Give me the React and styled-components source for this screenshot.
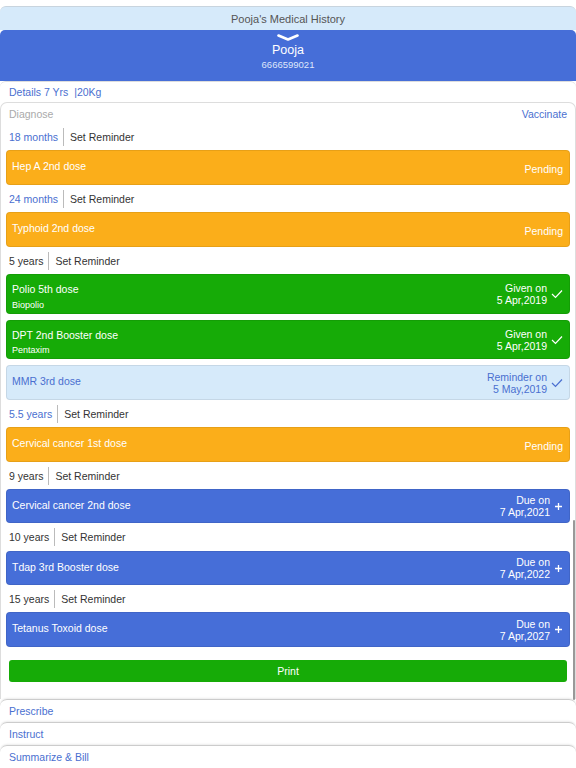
import React from "react";
import styled, { createGlobalStyle } from "styled-components";

const G = createGlobalStyle`
  body{margin:0;background:#fff;font-family:"Liberation Sans",Arial,sans-serif;}
`;
const Page = styled.div`width:576px;height:768px;overflow:hidden;display:flex;flex-direction:column;position:relative;`;
const Title = styled.div`margin-top:6px;height:23px;background:#d6eafa;border-top:1px solid #c8d4de;border-radius:6px 6px 0 0;
  display:flex;align-items:center;justify-content:center;font-size:11px;color:#555;`;
const Header = styled.div`height:51px;background:#466ed8;border-radius:5px 5px 0 0;color:#fff;display:flex;flex-direction:column;align-items:center;`;
const Name = styled.div`font-size:12.5px;margin-top:1px;`;
const Phone = styled.div`font-size:9.5px;color:#dfe6fb;margin-top:2px;`;
const Details = styled.div`height:20px;border-top:1px solid #ddd;border-radius:6px 6px 0 0;padding:0 9px;display:flex;align-items:center;font-size:10.5px;color:#4a6fd0;`;
const Panel = styled.div`border:1px solid #ddd;border-bottom:none;border-radius:7px 7px 0 0;padding:0 5px;display:flex;flex-direction:column;flex:1;`;
const Tabs = styled.div`height:21px;display:flex;justify-content:space-between;align-items:center;padding:0 3px 0 3px;font-size:10.5px;
  span:first-child{color:#aaa;} span:last-child{color:#4a6fd0;}`;
const Age = styled.div`height:${p=>p.h||26}px;display:flex;align-items:center;padding-left:3px;font-size:10.5px;`;
const AgeText = styled.span`color:${p=>p.blue?"#4a6fd0":"#333"};padding-right:5px;border-right:1px solid #bbb;line-height:18px;`;
const Rem = styled.span`color:#333;padding-left:6px;`;
const colors={orange:["#fbae1a","#fff"],green:["#16ab07","#fff"],light:["#d6eafa","#4a6fd0"],blue:["#466ed8","#fff"]};
const Card = styled.div`height:${p=>p.h}px;background:${p=>colors[p.c][0]};color:${p=>colors[p.c][1]};border-radius:4px;
  border:1px solid rgba(0,0,0,0.08);box-sizing:border-box;display:flex;justify-content:space-between;padding:0 6px 0 5px;font-size:10.5px;`;
const Left = styled.div`display:flex;flex-direction:column;justify-content:space-between;padding:5px 0 3px;`;
const Right = styled.div`display:flex;align-items:center;gap:4px;text-align:right;line-height:12px;`;
const Gap = styled.div`height:6px;flex:none;`;
const Print = styled.div`margin:13px 3px 0;height:22px;background:#16ab07;border-radius:3px;color:#fff;font-size:10.5px;display:flex;align-items:center;justify-content:center;`;
const Section = styled.div`height:22px;border-top:1px solid #ccc;border-radius:7px 7px 0 0;padding:0 9px;display:flex;align-items:center;font-size:10.5px;color:#4a6fd0;box-shadow:0 -1px 2px rgba(0,0,0,0.08);`;
const Scroll = styled.div`position:absolute;right:1px;top:520px;width:2px;height:180px;background:#999;border-radius:1px;`;

const Check = ({c}) => <svg width="12" height="10" viewBox="0 0 12 10"><path d="M1 5l3.5 3.5L11 1.5" fill="none" stroke={c} strokeWidth="1.2"/></svg>;
const Plus = () => <svg width="9" height="9" viewBox="0 0 9 9"><path d="M4.5 1v7M1 4.5h7" stroke="#fff" strokeWidth="1.3"/></svg>;

function V({c,name,sub,status,date,icon,h}) {
  return <Card c={c} h={h}>
    <Left><span style={{marginTop: sub?3:4}}>{name}</span>{sub? <span style={{fontSize:9}}>{sub}</span>:<span/>}</Left>
    <Right style={{paddingTop: date?0:2}}>
      <div>{status}{date && <><br/>{date}</>}</div>{icon}
    </Right>
  </Card>;
}

export default function App(){
  return <Page><G/>
    <Title>Pooja's Medical History</Title>
    <Header>
      <svg width="22" height="8" viewBox="0 0 22 8" style={{marginTop:4}}><path d="M1.5 1.5L11 5.5L20.5 1.5" fill="none" stroke="#fff" strokeWidth="2.6" strokeLinecap="round" strokeLinejoin="round"/></svg>
      <Name>Pooja</Name><Phone>6666599021</Phone>
    </Header>
    <Details>Details 7 Yrs &nbsp;|20Kg</Details>
    <Panel>
      <Tabs><span>Diagnose</span><span>Vaccinate</span></Tabs>
      <Age h={26}><AgeText blue>18 months</AgeText><Rem>Set Reminder</Rem></Age>
      <V c="orange" h={35} name="Hep A 2nd dose" status="Pending"/>
      <Age h={27}><AgeText blue>24 months</AgeText><Rem>Set Reminder</Rem></Age>
      <V c="orange" h={35} name="Typhoid 2nd dose" status="Pending"/>
      <Age h={27}><AgeText>5 years</AgeText><Rem>Set Reminder</Rem></Age>
      <V c="green" h={40} name="Polio 5th dose" sub="Biopolio" status="Given on" date="5 Apr,2019" icon={<Check c="#fff"/>}/>
      <Gap/>
      <V c="green" h={39} name="DPT 2nd Booster dose" sub="Pentaxim" status="Given on" date="5 Apr,2019" icon={<Check c="#fff"/>}/>
      <Gap/>
      <V c="light" h={35} name="MMR 3rd dose" status="Reminder on" date="5 May,2019" icon={<Check c="#4a6fd0"/>}/>
      <Age h={27}><AgeText blue>5.5 years</AgeText><Rem>Set Reminder</Rem></Age>
      <V c="orange" h={35} name="Cervical cancer 1st dose" status="Pending"/>
      <Age h={27}><AgeText>9 years</AgeText><Rem>Set Reminder</Rem></Age>
      <V c="blue" h={34} name="Cervical cancer 2nd dose" status="Due on" date="7 Apr,2021" icon={<Plus/>}/>
      <Age h={28}><AgeText>10 years</AgeText><Rem>Set Reminder</Rem></Age>
      <V c="blue" h={34} name="Tdap 3rd Booster dose" status="Due on" date="7 Apr,2022" icon={<Plus/>}/>
      <Age h={27}><AgeText>15 years</AgeText><Rem>Set Reminder</Rem></Age>
      <V c="blue" h={35} name="Tetanus Toxoid dose" status="Due on" date="7 Apr,2027" icon={<Plus/>}/>
      <Print>Print</Print>
    </Panel>
    <Section>Prescribe</Section>
    <Section>Instruct</Section>
    <Section>Summarize &amp; Bill</Section>
    <Scroll/>
  </Page>;
}
